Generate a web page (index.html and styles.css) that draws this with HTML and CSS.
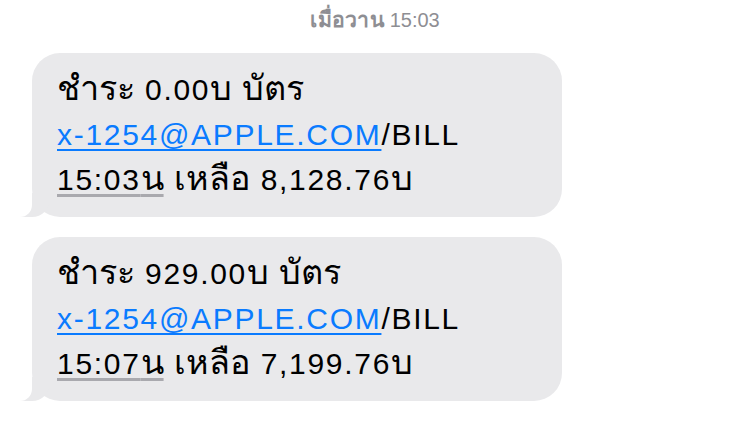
FILE: index.html
```html
<!DOCTYPE html>
<html lang="th">
<head>
    <meta charset="UTF-8">
    <meta name="viewport" content="width=device-width, initial-scale=1.0">
    <title>Messages</title>
    <link rel="stylesheet" href="styles.css">
</head>
<body>
    <main class="thread">
        <div class="stamp"><b class="th">เมื่อวาน</b> 15:03</div>

        <div class="bubble">
            <p><span class="th">ชำระ</span> 0.00<span class="th">บ</span> <span class="th">บัตร</span></p>
            <p><a href="#">x-1254@APPLE.COM</a>/BILL</p>
            <p><span class="time">15:03<span class="th">น</span></span> <span class="th">เหลือ</span> 8,128.76<span class="th">บ</span></p>
        </div>

        <div class="bubble">
            <p><span class="th">ชำระ</span> 929.00<span class="th">บ</span> <span class="th">บัตร</span></p>
            <p><a href="#">x-1254@APPLE.COM</a>/BILL</p>
            <p><span class="time">15:07<span class="th">น</span></span> <span class="th">เหลือ</span> 7,199.76<span class="th">บ</span></p>
        </div>
    </main>
</body>
</html>
```

FILE: styles.css
```css
body {
    margin: 0;
    background: #fff;
    font-family: "Liberation Sans", Arial, sans-serif;
    color: #000;
}

.thread {
    display: flex;
    flex-direction: column;
    align-items: flex-start;
    gap: 20px;
    padding: 0 0 0 32px;
}

.stamp {
    align-self: stretch;
    margin-left: -32px;
    text-align: center;
    color: #8e8e93;
    font-size: 20px;
    line-height: 22px;
    padding-top: 9px;
    margin-bottom: 2px;
}

.stamp b {
    font-weight: 600;
}

/* thai glyphs come out small in the fallback font */
.th {
    font-size: 1.14em;
    line-height: 0;
    letter-spacing: 0;
}

.stamp .th {
    font-size: 1.06em;
    letter-spacing: 0.3px;
}

.bubble {
    position: relative;
    width: 530px;
    box-sizing: border-box;
    padding: 14px 20px 15px 25px;
    background: #e9e9eb;
    border-radius: 28px;
    font-size: 30px;
    line-height: 45px;
    letter-spacing: 1.7px;
}

/* tail */
.bubble::before {
    content: "";
    position: absolute;
    left: -12px;
    bottom: 0;
    width: 30px;
    height: 24px;
    background: #e9e9eb;
    border-bottom-right-radius: 18px;
}

.bubble::after {
    content: "";
    position: absolute;
    left: -16px;
    bottom: 0;
    width: 16px;
    height: 24px;
    background: #fff;
    border-bottom-right-radius: 12px;
}

.bubble p {
    position: relative;
    z-index: 1;
    margin: 0;
}

.bubble a {
    color: #0a7bff;
    text-decoration: underline;
    text-decoration-thickness: 1.5px;
    text-underline-offset: 4px;
}

.time {
    text-decoration: underline;
    text-decoration-color: #a9a9ae;
    text-decoration-thickness: 3px;
    text-underline-offset: 4px;
}
```
